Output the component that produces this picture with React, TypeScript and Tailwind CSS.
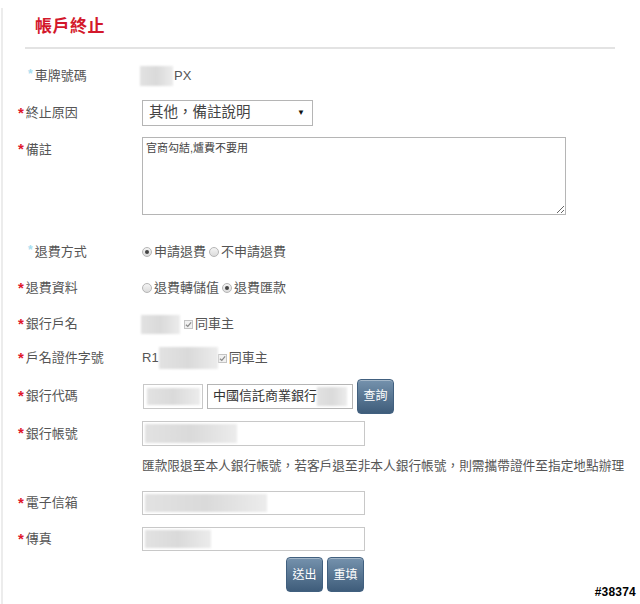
import React from 'react';

const font = { fontFamily: '"Liberation Sans", "Noto Sans CJK TC", sans-serif' };

function Label({ text, required = true }: { text: string; required?: boolean }) {
  return (
    <div className={`w-[142px] shrink-0 flex items-center text-[13px] text-[#555] ${required ? 'pl-[18px]' : 'pl-[28px]'}`}>
      <span
        className={
          required
            ? 'text-[#e0182d] text-[15px] font-bold leading-none mr-[2px] -mt-[2px]'
            : 'text-[#a9def0] text-[12px] font-bold leading-none mr-[2px] -mt-[4px]'
        }
      >
        *
      </span>
      <span>{text}</span>
    </div>
  );
}

function Radio({ checked, label }: { checked?: boolean; label: string }) {
  return (
    <span className="inline-flex items-center">
      <span className="w-[10px] h-[10px] rounded-full border border-[#b5b5b5] bg-gradient-to-b from-[#f4f4f4] to-[#dcdcdc] flex items-center justify-center mr-[2px]">
        {checked && <span className="w-[4px] h-[4px] rounded-full bg-[#444]" />}
      </span>
      <span>{label}</span>
    </span>
  );
}

function Check() {
  return (
    <span className="w-[9px] h-[9px] border border-[#c4c4c4] bg-[#f1f1f1] flex items-center justify-center mr-[2px]">
      <svg width="7" height="7" viewBox="0 0 8 8">
        <path d="M1 4.2 L3.2 6.2 L7 1.5" fill="none" stroke="#8a8a8a" strokeWidth="1.4" />
      </svg>
    </span>
  );
}

function Blur({ w, h = 20, className = '' }: { w: number; h?: number; className?: string }) {
  return (
    <span
      className={`inline-block bg-gradient-to-r from-[#e2e2e2] via-[#dadada] to-[#ececec] blur-[1px] ${className}`}
      style={{ width: w, height: h }}
    />
  );
}

function Input({ blur, h = 25 }: { blur: number; h?: number }) {
  return (
    <div className="w-[223px] border border-[#c8c8c8] bg-white flex items-center" style={{ height: h }}>
      <Blur w={blur} h={h - 6} className="ml-[2px]" />
    </div>
  );
}

function Btn({ text, className = '' }: { text: string; className?: string }) {
  return (
    <div
      className={`w-[37px] h-[35px] rounded-[4px] border border-[#41607f] bg-gradient-to-b from-[#7592ad] to-[#3f5d7b] text-white text-[12px] flex items-center justify-center shadow-[inset_0_1px_0_rgba(255,255,255,0.35)] ${className}`}
    >
      {text}
    </div>
  );
}

export default function App() {
  return (
    <div className="w-[640px] h-[604px] bg-white relative overflow-hidden" style={font}>
      {/* left frame edge */}
      <div className="absolute left-[1px] top-[8px] bottom-0 w-[2px] bg-[#ececec]" />

      <div className="flex flex-col">
        <h1 className="pl-[35px] pt-[17px] text-[17px] leading-[20px] font-bold text-[#d3182b] tracking-[0.5px]">帳戶終止</h1>
        <div className="ml-[25px] w-[590px] h-[2px] mt-[10px] bg-[#e3e3e3]" />

        {/* 車牌號碼 */}
        <div className="flex h-[24px] mt-[15px]">
          <Label text="車牌號碼" required={false} />
          <div className="flex items-center text-[13px] text-[#555]">
            <Blur w={33} h={20} className="-ml-[2px]" />
            <span className="ml-[1px]">PX</span>
          </div>
        </div>

        {/* 終止原因 */}
        <div className="flex h-[26px] mt-[12px]">
          <Label text="終止原因" />
          <div className="w-[171px] h-[26px] border border-[#b5b5b5] bg-white flex items-center justify-between pl-[6px] pr-[7px] text-[14.5px] text-[#444]">
            <span>其他，備註說明</span>
            <span className="text-[8px] text-[#111]">▼</span>
          </div>
        </div>

        {/* 備註 */}
        <div className="flex mt-[11px]">
          <div className="w-[142px] shrink-0 pt-[3px] h-[22px] flex">
            <Label text="備註" />
          </div>
          <textarea
            readOnly
            defaultValue="官商勾結,爐費不要用"
            className="w-[424px] h-[78px] border border-[#b5b5b5] px-[3px] py-[3px] text-[11px] leading-[14px] text-[#444] outline-none"
          />
        </div>

        {/* 退費方式 */}
        <div className="flex h-[24px] mt-[25px]">
          <Label text="退費方式" required={false} />
          <div className="flex items-center gap-[3px] text-[13px] text-[#555]">
            <Radio checked label="申請退費" />
            <Radio label="不申請退費" />
          </div>
        </div>

        {/* 退費資料 */}
        <div className="flex h-[24px] mt-[12px]">
          <Label text="退費資料" />
          <div className="flex items-center gap-[3px] text-[13px] text-[#555]">
            <Radio label="退費轉儲值" />
            <Radio checked label="退費匯款" />
          </div>
        </div>

        {/* 銀行戶名 */}
        <div className="flex h-[24px] mt-[12px]">
          <Label text="銀行戶名" />
          <div className="flex items-center text-[13px] text-[#555]">
            <Blur w={39} h={19} className="-ml-[1px] mr-[4px]" />
            <Check />
            <span>同車主</span>
          </div>
        </div>

        {/* 戶名證件字號 */}
        <div className="flex h-[24px] mt-[10px]">
          <Label text="戶名證件字號" />
          <div className="flex items-center text-[13px] text-[#555]">
            <span>R1</span>
            <Blur w={59} h={22} />
            <Check />
            <span>同車主</span>
          </div>
        </div>

        {/* 銀行代碼 */}
        <div className="flex h-[34px] mt-[9px]">
          <Label text="銀行代碼" />
          <div className="flex items-center">
            <div className="w-[60px] h-[25px] ml-[1px] border border-[#c8c8c8] flex items-center">
              <Blur w={53} h={17} className="ml-[3px]" />
            </div>
            <div className="w-[146px] h-[25px] ml-[4px] border border-[#b5b5b5] flex items-center pl-[5px] text-[13px] text-[#333]">
              <span>中國信託商業銀行</span>
              <Blur w={30} h={19} />
            </div>
            <Btn text="查詢" className="ml-[4px]" />
          </div>
        </div>

        {/* 銀行帳號 */}
        <div className="flex h-[25px] mt-[8px]">
          <Label text="銀行帳號" />
          <Input blur={92} />
        </div>

        {/* 匯款說明 */}
        <div className="h-[16px] mt-[12px] pl-[142px] text-[12.7px] leading-[16px] text-[#555] whitespace-nowrap">
          匯款限退至本人銀行帳號，若客戶退至非本人銀行帳號，則需攜帶證件至指定地點辦理
        </div>

        {/* 電子信箱 */}
        <div className="flex h-[24px] mt-[17px]">
          <Label text="電子信箱" />
          <Input blur={122} h={24} />
        </div>

        {/* 傳真 */}
        <div className="flex h-[24px] mt-[12px]">
          <Label text="傳真" />
          <Input blur={66} h={24} />
        </div>

        <div className="flex mt-[6px] pl-[286px] gap-[4px]">
          <Btn text="送出" />
          <Btn text="重填" />
        </div>
      </div>

      <div
        className="absolute right-[4px] bottom-[3px] text-[12px] font-bold text-black tracking-[0.2px]"
        style={{ textShadow: '1px 0 #fff, -1px 0 #fff, 0 1px #fff, 0 -1px #fff' }}
      >
        #38374
      </div>
    </div>
  );
}
